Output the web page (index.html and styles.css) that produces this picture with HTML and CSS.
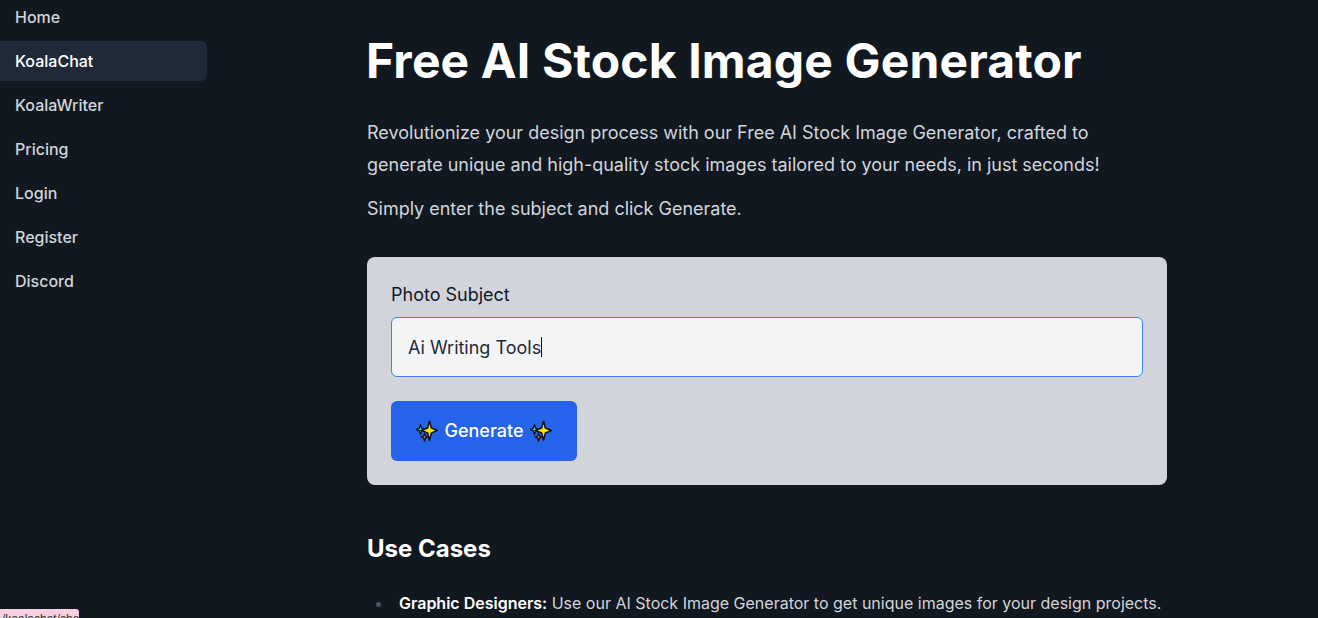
FILE: index.html
```html
<!DOCTYPE html>
<html lang="en">
<head>
<meta charset="utf-8">
<title>Free AI Stock Image Generator</title>
<link rel="stylesheet" href="styles.css">
</head>
<body>
<div class="layout">
  <nav class="sidebar">
    <a class="nav-link" href="#">Home</a>
    <a class="nav-link active" href="#">KoalaChat</a>
    <a class="nav-link" href="#">KoalaWriter</a>
    <a class="nav-link" href="#">Pricing</a>
    <a class="nav-link" href="#">Login</a>
    <a class="nav-link" href="#">Register</a>
    <a class="nav-link" href="#">Discord</a>
  </nav>
  <main class="content">
    <h1 class="title">Free AI Stock Image Generator</h1>
    <p class="lead">Revolutionize your design process with our Free AI Stock Image Generator, crafted to generate unique and high-quality stock images tailored to your needs, in just seconds!</p>
    <p class="lead second">Simply enter the subject and click Generate.</p>
    <section class="card">
      <label class="label" for="subject">Photo Subject</label>
      <div class="input"><span id="subject">Ai Writing Tools</span><span class="caret"></span></div>
      <button class="button" type="button">
        <svg class="spark" viewBox="0 0 22 22" aria-hidden="true"><use href="#sparkles"/></svg>
        <span class="button-text">Generate</span>
        <svg class="spark" viewBox="0 0 22 22" aria-hidden="true"><use href="#sparkles"/></svg>
      </button>
    </section>
    <h2 class="subtitle">Use Cases</h2>
    <ul class="cases">
      <li><strong>Graphic Designers:</strong> Use our AI Stock Image Generator to get unique images for your design projects.</li>
    </ul>
  </main>
</div>
<div class="status">/koalachat/chat</div>
<svg class="defs" aria-hidden="true">
  <symbol id="sparkles" viewBox="0 0 22 22">
    <path d="M4.5 5 L5.8 8.2 L9 9.5 L5.8 10.8 L4.5 14 L3.2 10.8 L0.5 9.5 L3.2 8.2Z" fill="#2ad0e8" stroke="#111" stroke-width="1.3"/>
    <path d="M8.5 14 L9.4 16 L11.5 17 L9.4 18 L8.5 21 L7.6 18 L5.5 17 L7.6 16Z" fill="#f07fc0" stroke="#111" stroke-width="1.3"/>
    <path d="M13.5 1 L15.3 8 L21.5 10.5 L15.3 13 L13.5 20.5 L11.7 13 L5.5 10.5 L11.7 8Z" fill="#ffdf00" stroke="#111" stroke-width="1.5"/>
  </symbol>
</svg>
</body>
</html>
```
FILE: styles.css
```css
* { box-sizing: border-box; }
html, body { margin: 0; height: 100%; overflow: hidden; }
body { background: #111820; font-family: Inter, "Liberation Sans", sans-serif; }
.layout { display: flex; height: 618px; overflow: hidden; }
.sidebar { width: 207px; flex: none; display: flex; flex-direction: column; gap: 4px; margin-top: -3px; }
.nav-link { display: block; height: 40px; line-height: 40px; padding-left: 15px; font-size: 16px; font-weight: 500; color: #d1d5db; text-decoration: none; border-radius: 0 6px 6px 0; }
.nav-link.active { background: #1f2937; color: #fff; }
.content { margin-left: 160px; width: 800px; flex: none; padding-top: 31px; }
.title { margin: 0 0 0 -1px; font-size: 48px; line-height: 60px; font-weight: 700; color: #fff; letter-spacing: 0.14px; }
.lead { margin: 26px 0 0; font-size: 18px; line-height: 32px; color: #d1d5db; letter-spacing: -0.01px; }
.second { margin-top: 12px; }
.card { margin-top: 32px; padding: 24px; background: #d1d5db; border-radius: 8px; }
.label { display: block; font-size: 18px; line-height: 28px; font-weight: 400; color: #111827; margin-bottom: 8px; }
.input { display: flex; align-items: center; height: 60px; padding: 0 16px; background: #f3f4f6; border: 1px solid #3b82f6; border-radius: 6px; font-size: 18px; color: #1f2937; }
.caret { width: 1px; height: 20px; background: #111; }
.button { display: flex; align-items: center; justify-content: center; gap: 6px; margin-top: 24px; width: 186px; height: 60px; background: #2563eb; color: #fff; border: 0; border-radius: 6px; font: 500 18px Inter, "Liberation Sans", sans-serif; }
.button-text { position: relative; top: -1px; }
.spark { width: 22px; height: 22px; }
.subtitle { margin: 48px 0 0; font-size: 24px; line-height: 32px; font-weight: 700; color: #fff; }
.cases { margin: 24px 0 0; padding-left: 32px; list-style: none; font-size: 16px; line-height: 28px; color: #d1d5db; }
.cases li::before { content: ""; display: inline-block; width: 5px; height: 5px; margin-left: -23px; margin-right: 18px; border-radius: 50%; background: #4b5563; vertical-align: 2px; }
.cases strong { color: #fff; font-weight: 600; }
.status { position: absolute; left: 0; top: 609px; height: 9px; width: 79px; padding: 4px 0 0 2px; background: #f6d0e0; border-top-right-radius: 3px; font: 12px/13px "Liberation Sans", sans-serif; color: #333; overflow: hidden; white-space: nowrap; }
.defs { position: absolute; width: 0; height: 0; }
```
